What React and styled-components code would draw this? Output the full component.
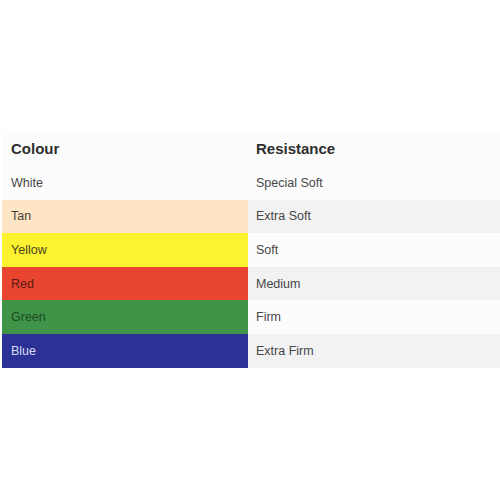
import React from "react"
import styled, { createGlobalStyle } from "styled-components"

const GlobalStyle = createGlobalStyle`
  html, body {
    margin: 0;
    padding: 0;
    background: #ffffff;
    font-family: "Liberation Sans", Arial, sans-serif;
  }
`

const Page = styled.div`
  width: 500px;
  height: 500px;
  padding-top: 130px;
  box-sizing: border-box;
`

const Table = styled.div`
  margin-left: 2px;
  display: grid;
  grid-template-columns: 246px 1fr;
  background: #fcfcfc;
`

const HeadCell = styled.div`
  height: 36px;
  display: flex;
  align-items: center;
  padding-left: ${p => p.$pad}px;
  font-size: 15px;
  font-weight: bold;
  color: #2e2e2e;
  padding-top: 1px;
  box-sizing: border-box;
`

const Cell = styled.div`
  height: 33.6px;
  display: flex;
  align-items: center;
  padding-left: ${p => p.$pad}px;
  font-size: 12.5px;
  color: ${p => p.$text || "#474747"};
  background: ${p => p.$bg};
  box-sizing: border-box;
`

const rows = [
  { colour: "White", bg: "#fcfcfc", text: "#474747", resistance: "Special Soft" },
  { colour: "Tan", bg: "#fde5c5", text: "#4a3f35", resistance: "Extra Soft" },
  { colour: "Yellow", bg: "#fdf230", text: "#4a4520", resistance: "Soft" },
  { colour: "Red", bg: "#ea462f", text: "#5a1a12", resistance: "Medium" },
  { colour: "Green", bg: "#409448", text: "#1c4a22", resistance: "Firm" },
  { colour: "Blue", bg: "#2c3196", text: "#d9dbf2", resistance: "Extra Firm" },
]

export default function App() {
  return (
    <Page>
      <GlobalStyle />
      <Table>
        <HeadCell $pad={9}>Colour</HeadCell>
        <HeadCell $pad={8}>Resistance</HeadCell>
        {rows.map((r, i) => (
          <React.Fragment key={r.colour}>
            <Cell $pad={9} $bg={r.bg} $text={r.text}>{r.colour}</Cell>
            <Cell $pad={8} $bg={i % 2 ? "#f2f2f2" : "#fcfcfc"}>{r.resistance}</Cell>
          </React.Fragment>
        ))}
      </Table>
    </Page>
  )
}
